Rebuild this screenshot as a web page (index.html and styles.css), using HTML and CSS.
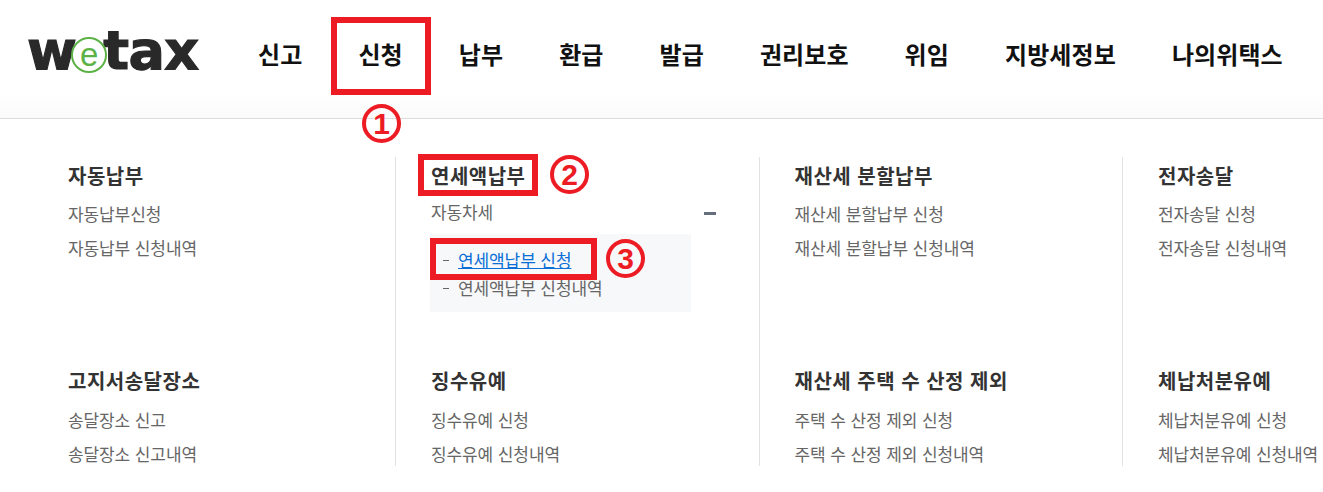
FILE: index.html
```html
<!DOCTYPE html>
<html lang="ko">
<head>
<meta charset="utf-8">
<title>wetax</title>
<link rel="stylesheet" href="styles.css">
</head>
<body>
<div class="page">
  <header class="header">
    <a class="logo"><span>w</span><span class="logo-e"><i>e</i></span><span>tax</span></a>
    <nav class="nav">
      <a>신고</a><a>신청</a><a>납부</a><a>환급</a><a>발급</a><a>권리보호</a><a>위임</a><a>지방세정보</a><a>나의위택스</a>
    </nav>
  </header>
  <main class="menu">
    <section class="col">
      <h3>자동납부</h3>
      <a>자동납부신청</a>
      <a>자동납부 신청내역</a>
    </section>
    <section class="col">
      <h3>연세액납부</h3>
      <a class="toggle">자동차세<b class="minus"></b></a>
      <ul class="sub">
        <li><a class="current">연세액납부 신청</a></li>
        <li><a>연세액납부 신청내역</a></li>
      </ul>
    </section>
    <section class="col">
      <h3>재산세 분할납부</h3>
      <a>재산세 분할납부 신청</a>
      <a>재산세 분할납부 신청내역</a>
    </section>
    <section class="col">
      <h3>전자송달</h3>
      <a>전자송달 신청</a>
      <a>전자송달 신청내역</a>
    </section>
    <section class="col">
      <h3>고지서송달장소</h3>
      <a>송달장소 신고</a>
      <a>송달장소 신고내역</a>
    </section>
    <section class="col">
      <h3>징수유예</h3>
      <a>징수유예 신청</a>
      <a>징수유예 신청내역</a>
    </section>
    <section class="col">
      <h3>재산세 주택 수 산정 제외</h3>
      <a>주택 수 산정 제외 신청</a>
      <a>주택 수 산정 제외 신청내역</a>
    </section>
    <section class="col">
      <h3>체납처분유예</h3>
      <a>체납처분유예 신청</a>
      <a>체납처분유예 신청내역</a>
    </section>
  </main>
  <div class="mark box-1"></div>
  <div class="mark box-2"></div>
  <div class="mark box-3"></div>
  <div class="num num-1">1</div>
  <div class="num num-2">2</div>
  <div class="num num-3">3</div>
</div>
</body>
</html>
```
FILE: styles.css
```css
* { box-sizing: border-box; }
html, body { margin: 0; padding: 0; background: #fff; }
body {
  font-family: "Noto Sans CJK KR", "Noto Sans", sans-serif;
  color: #333;
}
.page {
  position: relative;
  width: 1323px;
  height: 492px;
  overflow: hidden;
}
.header {
  display: flex;
  align-items: center;
  height: 119px;
  padding: 0 0 11px 27px;
  border-bottom: 1px solid #dcdcdc;
  background: linear-gradient(#fff 80%, #fafafa);
}
.logo {
  display: flex;
  align-items: center;
  width: 231px;
  margin-top: -6px;
  font-family: "DejaVu Sans", sans-serif;
  font-weight: 700;
  font-size: 54px;
  line-height: 54px;
  letter-spacing: -0.6px;
  color: #292929;
  -webkit-text-stroke: 1.2px #292929;
}
.logo-e {
  position: relative;
  display: flex;
  align-items: center;
  justify-content: center;
  flex: none;
  width: 36px;
  height: 36px;
  margin: 9px -4px 0 -5px;
  border: 2px solid #5cb247;
  border-radius: 50%;
  background: #fff;
  -webkit-text-stroke: 0;
}
.logo-e i {
  font-family: "Liberation Sans", sans-serif;
  font-style: normal;
  font-weight: 400;
  font-size: 33px;
  line-height: 28px;
  letter-spacing: 0;
  color: #5cb247;
}
.nav {
  display: flex;
  gap: 56px;
  font-size: 24px;
  font-weight: 700;
  line-height: 34px;
  color: #111;
  white-space: nowrap;
}
.nav a { letter-spacing: 0.1px; }
.menu {
  display: grid;
  grid-template-columns: repeat(4, 363.5px);
  grid-template-rows: 205px 104px;
  width: 1500px;
  padding-top: 38px;
}
.col {
  display: flex;
  flex-direction: column;
  align-items: flex-start;
  padding-left: 68px;
  position: relative;
  white-space: nowrap;
}
.col + .col { padding-left: 35px; border-left: 1px solid #e2e2e2; margin-left: 31.5px; width: 331.5px; }
.col:nth-child(5) { padding-left: 68px; margin-left: 0; border-left: 0; width: auto; }
.col h3 {
  margin: 0 0 2px;
  font-size: 20px;
  font-weight: 700;
  line-height: 38px;
  letter-spacing: 0.5px;
  color: #333;
}
.col:nth-child(n+5) h3 { margin-bottom: 3px; }
.col a {
  font-size: 17px;
  line-height: 34px;
  font-weight: 400;
  color: #666;
  letter-spacing: -0.1px;
}
.toggle {
  display: flex;
  justify-content: space-between;
  width: 285px;
  margin-top: -2px;
  align-items: center;
}
.minus {
  width: 12px;
  height: 3px;
  margin-top: 3px;
  background: #666e7d;
}
.sub {
  list-style: none;
  width: 261px;
  height: 78px;
  margin: 5px 0 0 -1px;
  padding: 12px 13px;
  background: #f7f8fa;
}
.sub li {
  display: flex;
  align-items: center;
  height: 28px;
}
.sub li::before {
  content: "";
  width: 6px;
  height: 1px;
  margin-right: 9px;
  background: #666;
}
.sub .current {
  color: #0a6fd6;
  text-decoration: underline;
}
.mark {
  position: absolute;
  border: 6px solid #ed1c24;
}
.box-1 { left: 331px; top: 17px; width: 100px; height: 78px; }
.box-2 { left: 418px; top: 154px; width: 120px; height: 42px; }
.box-3 { left: 430px; top: 238px; width: 167px; height: 42px; }
.num {
  position: absolute;
  display: flex;
  align-items: center;
  justify-content: center;
  width: 39px;
  height: 39px;
  border: 4px solid #ed1c24;
  border-radius: 50%;
  font-family: "Liberation Sans", sans-serif;
  font-size: 30px;
  font-weight: 700;
  line-height: 1;
  color: #ed1c24;
}
.num-1 { left: 362px; top: 104px; }
.num-2 { left: 550px; top: 155px; }
.num-3 { left: 606px; top: 239px; }
```
